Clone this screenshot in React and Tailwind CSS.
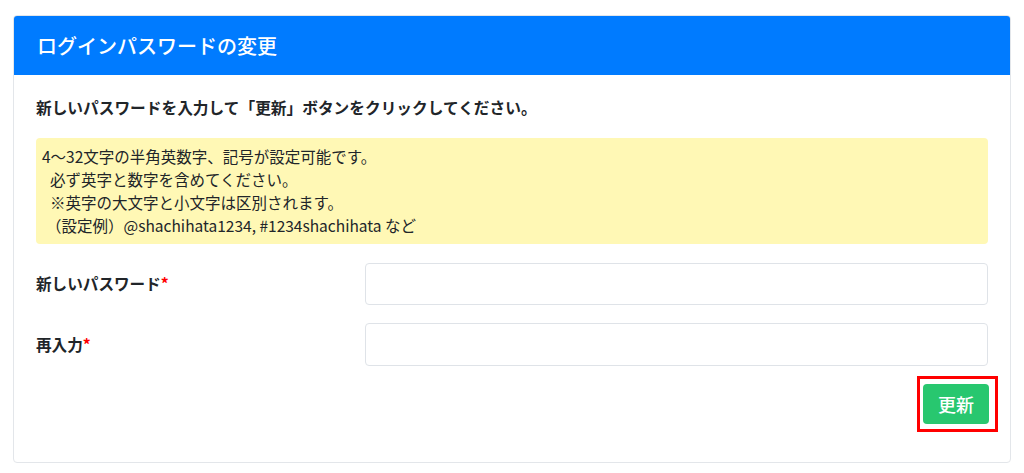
import React from "react";

export default function App() {
  const font = { fontFamily: '"Noto Sans CJK JP", "Noto Sans", sans-serif' };
  return (
    <div className="w-[1024px] h-[473px] bg-white pt-[15px] pl-[13px]" style={font}>
      <div className="w-[998px] h-[448px] rounded-[4px] border border-[#e3e6ea] flex flex-col overflow-hidden">
        <div className="h-[59px] bg-[#007bff] flex items-center px-[23px] text-white text-[20px] font-medium">
          ログインパスワードの変更
        </div>
        <div className="px-[22px] pt-[22px] flex flex-col">
          <div className="text-[15.7px] font-bold text-[#212529] leading-[22px]">
            新しいパスワードを入力して「更新」ボタンをクリックしてください。
          </div>
          <div className="mt-[19px] bg-[#fff8b5] rounded-[4px] px-[6px] py-[7px] text-[15.5px] leading-[23px] text-[#212529]">
            <div>4〜32文字の半角英数字、記号が設定可能です。</div>
            <div className="pl-[8px]">必ず英字と数字を含めてください。</div>
            <div className="pl-[8px]">※英字の大文字と小文字は区別されます。</div>
            <div className="pl-[4px]">（設定例）@shachihata1234, #1234shachihata など</div>
          </div>
          <div className="mt-[19px] flex items-center">
            <div className="w-[329px] text-[15.6px] font-bold text-[#212529]">
              新しいパスワード<span className="text-[#ff0000]">*</span>
            </div>
            <input type="password" className="flex-1 h-[42px] rounded-[4px] border border-[#dfe3e8] bg-white outline-none" />
          </div>
          <div className="mt-[18px] flex items-center">
            <div className="w-[329px] text-[15.6px] font-bold text-[#212529]">
              再入力<span className="text-[#ff0000]">*</span>
            </div>
            <input type="password" className="flex-1 h-[43px] rounded-[4px] border border-[#dfe3e8] bg-white outline-none" />
          </div>
          <div className="mt-[18px] flex justify-end pr-[0px]">
            <div className="relative mr-[-1px]">
              <button className="w-[66px] h-[40px] rounded-[4px] bg-[#28c76f] text-white text-[18px] font-medium flex items-center justify-center">
                更新
              </button>
              <div className="absolute -left-[6px] -right-[9px] -top-[8px] -bottom-[8px] border-[3px] border-[#ff0000] pointer-events-none" />
            </div>
          </div>
        </div>
      </div>
    </div>
  );
}
